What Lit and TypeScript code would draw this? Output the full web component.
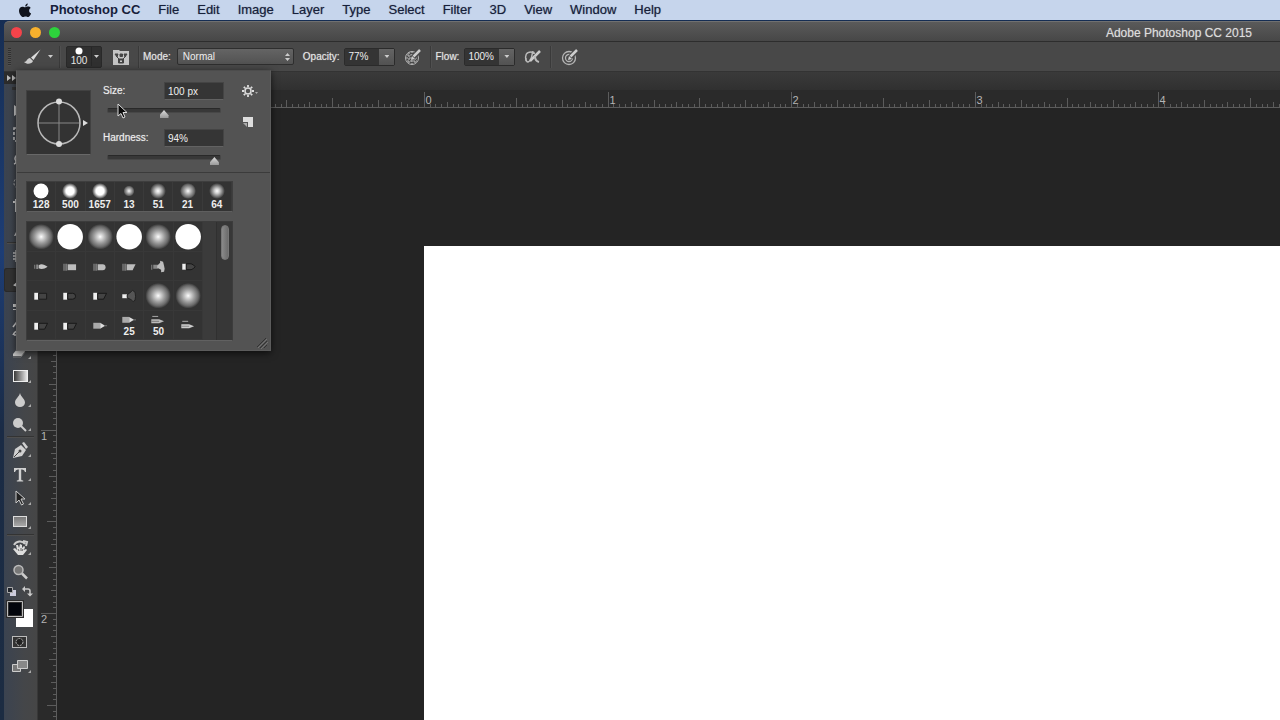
import { LitElement, html, svg, css } from "lit";
import { customElement, property, state } from "lit/decorators.js";
import { classMap } from "lit/directives/class-map.js";

const INCH = 183.6;

@customElement("ps-ruler")
class PsRuler extends LitElement {
  @property({ type: Boolean }) vertical = false;
  @property({ type: Number }) origin = 0;
  @state() private extent = 0;
  private observer = new ResizeObserver(() => this.measure());

  static styles = css`
    :host { display: block; overflow: hidden; background: #2a2a2a; }
    svg { display: block; width: 100%; height: 100%; }
    .tick { stroke: #5c5c5c; stroke-width: 1; shape-rendering: crispEdges; }
    .num { fill: #b4b4b4; font: 11px "Liberation Sans", Arial, sans-serif; }
  `;

  connectedCallback() {
    super.connectedCallback();
    this.observer.observe(this);
  }

  disconnectedCallback() {
    this.observer.disconnect();
    super.disconnectedCallback();
  }

  private measure() {
    this.extent = this.vertical ? this.clientHeight : this.clientWidth;
  }

  firstUpdated() {
    this.measure();
  }

  render() {
    const marks = [];
    const step = INCH / 32;
    const size = this.vertical ? 19 : 18;
    const limit = this.extent;
    const first = -Math.floor(this.origin / step);
    for (let i = first; this.origin + i * step < limit; i++) {
      const p = Math.round(this.origin + i * step) + 0.5;
      const len = i % 32 === 0 ? 16 : i % 16 === 0 ? 10 : i % 8 === 0 ? 8 : i % 4 === 0 ? 6 : 4;
      marks.push(
        this.vertical
          ? svg`<line class="tick" x1=${size - len} x2=${size} y1=${p} y2=${p}></line>`
          : svg`<line class="tick" y1=${size - len} y2=${size} x1=${p} x2=${p}></line>`
      );
      if (i % 32 === 0 && i >= 0 && p + 12 < limit) {
        marks.push(
          this.vertical
            ? svg`<text class="num" x="3" y=${p + 9}>${i / 32}</text>`
            : svg`<text class="num" x=${p + 1} y="14">${i / 32}</text>`
        );
      }
    }
    const edge = this.vertical
      ? svg`<line class="tick" x1="18.5" x2="18.5" y1="0" y2=${limit}></line>`
      : svg`<line class="tick" x1="0" x2=${limit} y1="17.5" y2="17.5"></line>`;
    return html`<svg aria-hidden="true">${marks}${edge}</svg>`;
  }
}

const tip = {
  soft: svg`<circle cx="15" cy="15" r="13" fill="url(#soft)"/>`,
  hard: svg`<circle cx="15" cy="15" r="13" fill="#fff"/>`,
  round: svg`<path d="M8 13h1v4h-1zM10 12.6h2v4.6h-2z" fill="#8a8a8a"/><path d="M12.500 13.500C15 11.500 18 12.500 21.500 15C18 17.500 15 17.800 12.500 16.500z" fill="#c6c6c6"/>`,
  flat: svg`<path d="M8 12h1.500v7H8zM10 12h2v7h-2z" fill="#777"/><path d="M12.500 12.500h8.500v6h-8.500z" fill="#bdbdbd"/>`,
  flatRound: svg`<path d="M8 12h1.500v7H8zM10 12h2v7h-2z" fill="#777"/><path d="M12.500 12.500h5q3 0 3 3t-3 3h-5z" fill="#bdbdbd"/>`,
  angle: svg`<path d="M8 12h1.500v7H8zM10 12h2v7h-2z" fill="#777"/><path d="M12.500 12.500h9l-3 6h-6z" fill="#bdbdbd"/>`,
  fan: svg`<path d="M8 13h1v5H8zM10 13h5v4h-5z" fill="#888"/><path d="M14 14l3-3V9l3 1 1 4 .6 3-.6 3-3 .5V18l-4-2z" fill="#bdbdbd"/>`,
  bPoint: svg`<path d="M9 12h4v6H9z" fill="#eee"/><path d="M13 12h5q3 1 4 3-1 2-4 3h-5z" fill="#444" stroke="#171717"/>`,
  bFlat: svg`<path d="M8 12h4v7H8z" fill="#f0f0f0"/><path d="M12.500 12.500h8v6h-8z" fill="#444" stroke="#1d1d1d"/>`,
  bCurve: svg`<path d="M8 12h4v7H8z" fill="#f0f0f0"/><path d="M12.500 12.500h5q3 0 3 3t-3 3h-5z" fill="#444" stroke="#171717"/>`,
  bAngle: svg`<path d="M8 12h4v7H8z" fill="#f0f0f0"/><path d="M12.500 12.500h9l-3 6h-6z" fill="#444" stroke="#171717"/>`,
  bFan: svg`<path d="M8 13.500h5v4H8z" fill="#eee"/><path d="M13 14l4-3 1.500-1.500 2.500 2 .5 4-.5 4-2 1.500L17 19l-4-2z" fill="#555" stroke="#222"/>`,
  pencil: svg`<path d="M8 12h7v6H8z" fill="#aaa"/><path d="M15 12l5 3-5 3z" fill="#ddd"/><path d="M19 14.500h3v1h-3z" fill="#777"/>`,
  pencilHi: svg`<path d="M8 6h7v6H8z" fill="#aaa"/><path d="M15 6l5 3-5 3z" fill="#ddd"/><path d="M19 8.500h3v1h-3z" fill="#777"/>`,
  sprayHi: svg`<path d="M9 5h6v1H9z" fill="#aaa"/><path d="M8 8.500h8l5 2-5 2H8z" fill="#bbb"/><path d="M8 10h8v1H8z" fill="#777"/>`,
  spray: svg`<path d="M9 10h6v1H9z" fill="#aaa"/><path d="M8 13.500h8l5 2-5 2H8z" fill="#ccc"/><path d="M8 15h8v1H8z" fill="#888"/>`
};

const library: { kind: keyof typeof tip; size?: number }[] = [
  { kind: "soft" }, { kind: "hard" }, { kind: "soft" }, { kind: "hard" }, { kind: "soft" }, { kind: "hard" },
  { kind: "round" }, { kind: "flat" }, { kind: "flatRound" }, { kind: "angle" }, { kind: "fan" }, { kind: "bPoint" },
  { kind: "bFlat" }, { kind: "bCurve" }, { kind: "bAngle" }, { kind: "bFan" }, { kind: "soft" }, { kind: "soft" },
  { kind: "bAngle" }, { kind: "bAngle" }, { kind: "pencil" }, { kind: "pencilHi", size: 25 }, { kind: "sprayHi", size: 50 }, { kind: "spray" }
];

const recent = [
  { size: 128, r: 7.5, fill: "#fff" },
  { size: 500, r: 8, fill: "url(#firm)" },
  { size: 1657, r: 8, fill: "url(#firm)" },
  { size: 13, r: 5.5, fill: "url(#soft)" },
  { size: 51, r: 8, fill: "url(#mid)" },
  { size: 21, r: 8, fill: "url(#soft)" },
  { size: 64, r: 8, fill: "url(#mid)" }
];

const gradients = svg`<defs>
  <radialGradient id="soft"><stop offset="0" stop-color="#fff"/><stop offset=".12" stop-color="#e4e4e4"/><stop offset=".5" stop-color="#9c9c9c"/><stop offset=".8" stop-color="#686868"/><stop offset="1" stop-color="#333"/></radialGradient>
  <radialGradient id="mid"><stop offset="0" stop-color="#fff"/><stop offset=".3" stop-color="#d0d0d0"/><stop offset=".7" stop-color="#777"/><stop offset="1" stop-color="#303030"/></radialGradient>
  <radialGradient id="firm"><stop offset="0" stop-color="#fff"/><stop offset=".5" stop-color="#fff"/><stop offset=".75" stop-color="#999"/><stop offset="1" stop-color="#303030"/></radialGradient>
</defs>`;

@customElement("ps-brush-panel")
class PsBrushPanel extends LitElement {
  static styles = css`
    :host {
      display: block; box-sizing: border-box; width: 255px; color: #eee;
      background: #535353; border: 1px solid #5c5c5c; border-top-color: #4c4c4c;
      box-shadow: 0 2px 7px #000a;
      font: 10px/14px "Liberation Sans", Arial, sans-serif;
    }
    * { box-sizing: border-box; }
    svg { display: block; }
    button { background: none; border: 0; padding: 0; color: inherit; font: inherit; }
    .top { display: flex; height: 102px; padding: 11px 12px 0 9px; border-bottom: 1px solid #3b3b3b; }
    .angle { width: 65px; height: 65px; margin-top: 8px; background: #333; border: 1px solid #414141; border-bottom-color: #686868; }
    .fields { margin-left: 12px; width: 121px; }
    .line { display: flex; justify-content: space-between; align-items: center; height: 18px; text-shadow: 0 0 1px #eee8; }
    .line input {
      width: 60px; height: 18px; padding: 0 3px; color: #eee; font: inherit;
      background: #353535; border: 1px solid #444; border-bottom-color: #626262; outline: 0;
    }
    input[type="range"] {
      appearance: none; display: block; width: 114px; height: 13px; margin: 4px 0 12px 4px;
      background: none; outline: 0;
    }
    input[type="range"]::-webkit-slider-runnable-track {
      height: 5px; border-radius: 2px; background: #383838; border: 1px solid #474747; border-top-color: #292929;
    }
    input[type="range"]::-webkit-slider-thumb {
      appearance: none; width: 9px; height: 8px; margin-top: 1px;
      background: linear-gradient(#ddd, #999);
      clip-path: polygon(50% 0, 100% 65%, 100% 100%, 0 100%, 0 65%);
    }
    .side { display: flex; flex-direction: column; gap: 17px; padding-top: 2px; margin-left: auto; }
    .recent {
      display: grid; grid-template-columns: repeat(7, minmax(0, 1fr)); width: 207px; height: 31px; margin: 8px 9px 9px;
      background: #333; border: 1px solid #3e3e3e; border-bottom-color: #5f5f5f;
    }
    .recent button { border-right: 1px solid #3a3a3a; overflow: visible; }
    .recent svg { width: 28px; height: 16px; margin: 0 auto; }
    .num { display: block; font-size: 10px; line-height: 12px; font-weight: 700; text-align: center; }
    .list { display: flex; width: 207px; height: 120px; margin: 0 9px 9px; background: #333; border: 1px solid #3c3c3c; border-bottom-color: #616161; }
    .cells { display: grid; grid-template: repeat(4, minmax(0, 1fr)) / repeat(6, minmax(0, 1fr)); width: 176px; }
    .cells button { position: relative; border: 1px solid #383838; border-width: 0 1px 1px 0; }
    .cells svg { width: 100%; height: 100%; overflow: visible; }
    .cells .num { position: absolute; left: 0; right: 0; bottom: 1px; }
    .blank { flex: 1; background: #3b3b3b; }
    .scroll { width: 16px; padding: 3px 0 0 4px; background: #373737; border-left: 1px solid #303030; }
    .thumb { width: 8px; height: 35px; border-radius: 4px; background: linear-gradient(90deg, #8a8a8a, #6c6c6c); border: 1px solid #777; }
    .grip { position: absolute; right: 2px; bottom: 1px; }
  `;

  render() {
    return html`
      <div class="top">
        <div class="angle">
          <svg width="63" height="63" viewBox="0 0 63 63" fill="none">
            <path d="M11 32H53M32 11V53" stroke="#888"/>
            <circle cx="32" cy="32" r="21" stroke="#b8b8b8" stroke-width="1.500"/>
            <circle cx="32" cy="10.500" r="3" fill="#ddd"/><circle cx="32" cy="53" r="3" fill="#ddd"/>
            <path d="M56 29l5 3-5 3z" fill="#ddd"/>
          </svg>
        </div>
        <div class="fields">
          <div class="line"><label for="size">Size:</label><input id="size" value="100 px" /></div>
          <input type="range" aria-label="Size" min="0" max="200" value="100" />
          <div class="line"><label for="hard">Hardness:</label><input id="hard" value="94%" /></div>
          <input type="range" aria-label="Hardness" min="0" max="95" value="94" />
        </div>
        <div class="side">
          <button aria-label="Panel options">
            <svg width="16" height="14" viewBox="0 0 16 14">
              <g stroke="#ddd" fill="none"><circle cx="6" cy="7" r="3" stroke-width="1.500"/><path stroke-width="1.800" d="M6 1v2M6 11v2M0 7h2M10 7h2M1.800 2.800l1.400 1.400M8.800 9.800l1.400 1.400M10.200 2.800L8.800 4.200M3.200 9.800l-1.400 1.400"/></g>
              <path d="M13 8h3l-1.500 2z" fill="#aaa"/>
            </svg>
          </button>
          <button aria-label="New brush preset">
            <svg width="16" height="14" viewBox="0 0 16 14"><path d="M1 2h10v10H6V7H1z" fill="#ddd"/><path d="M1 8h4v4z" fill="#aaa"/></svg>
          </button>
        </div>
      </div>
      <div class="recent">
        ${recent.map((b) => html`<button>
          <svg viewBox="0 0 28 16">${gradients}<circle cx="14" cy="8" r=${b.r} fill=${b.fill}></circle></svg>
          <span class="num">${b.size}</span>
        </button>`)}
      </div>
      <div class="list">
        <div class="cells">
          ${library.map((b) => html`<button aria-label="Brush tip">
            <svg viewBox="1 0 28 29">${gradients}${tip[b.kind]}</svg>
            ${b.size ? html`<span class="num">${b.size}</span>` : ""}
          </button>`)}
        </div>
        <div class="blank"></div>
        <div class="scroll"><div class="thumb"></div></div>
      </div>
      <svg class="grip" width="11" height="11" viewBox="0 0 11 11"><path d="M0 9L9 0M3 10L10 3M7 10l3-3" stroke="#333"/><path d="M1 10L10 1M4 11l7-7" stroke="#888" stroke-width=".6"/></svg>
    `;
  }
}

const tool = {
  move: svg`<path d="M4 5l9 6-9 5z" fill="#ccc"/>`,
  marquee: svg`<rect x="4" y="4" width="13" height="13" fill="none" stroke="#ccc" stroke-width="1.500" stroke-dasharray="3 2"/>`,
  lasso: svg`<path d="M4 16c3-1 2-3 1-5 0-5 8-8 11-4 2 5-5 8-10 5" fill="none" stroke="#ccc" stroke-width="1.500"/>`,
  quick: svg`<circle cx="10" cy="11" r="6" fill="none" stroke="#bbb" stroke-dasharray="2 2"/>`,
  crop: svg`<path d="M3 6h12v11M6 3v12h11" fill="none" stroke="#ccc" stroke-width="2"/>`,
  dropper: svg`<path d="M4 16l2-4 5-5 3 3-5 5z" fill="#ccc"/>`,
  heal: svg`<path d="M3 7h14M3 10h14M3 13h14M6 4v12" stroke="#bbb" stroke-width="1.500"/>`,
  brush: svg`<path d="M3 15c2 0 2-3 5-3l2 2c-1 3-5 3-7 1zM9 11l8-8-6 9z" fill="#ddd"/>`,
  stamp: svg`<path d="M3 10h14v3H3zM3 15h14v1H3zM8 4h4v6H8z" fill="#ccc"/>`,
  history: svg`<path d="M3 17c1-2 2-4 5-4l7-8M3 9l3-4 3 4M4 17h4" stroke="#ccc" fill="none" stroke-width="1.500"/>`,
  eraser: svg`<path d="M3 12l5-6h9l-5 8H3z" fill="#c4c4c4"/><path d="M3 15h8l4-5" stroke="#777" fill="none"/>`,
  gradient: svg`<defs><linearGradient id="gr"><stop stop-color="#333"/><stop offset="1" stop-color="#eee"/></linearGradient></defs><rect x="3.500" y="4.500" width="14" height="11" fill="url(#gr)" stroke="#eee"/>`,
  blur: svg`<path d="M10 3c1 4 5 6 5 9.500a5 4.500 0 0 1-10 0C5 9 9 7 10 3z" fill="#ccc"/>`,
  dodge: svg`<circle cx="8" cy="9" r="5" fill="#ccc"/><path d="M11 12l5 5" stroke="#ccc" stroke-width="2"/>`,
  pen: svg`<path d="M3 18l2-9 6-4 5 5-4 6z" fill="#d0d0d0"/><path d="M12 3l2-1 4 5-2 2z" fill="#d0d0d0"/><path d="M4 17l5-5" stroke="#444"/><circle cx="10" cy="11" r="1.500" fill="#444"/>`,
  type: svg`<path d="M4 4h12v4h-1q-.5-2.500-3-2.500h-.8v10q0 1 2 1v.9H6.800v-.9q2 0 2-1v-10H8q-2.500 0-3 2.500H4z" fill="#d0d0d0"/>`,
  select: svg`<path d="M6 3v12l3-3 2.500 5 2-1-2.500-5h4z" fill="#222" stroke="#ccc"/>`,
  rect: svg`<defs><linearGradient id="rg" x2="0" y2="1"><stop stop-color="#777"/><stop offset="1" stop-color="#aaa"/></linearGradient></defs><rect x="3.500" y="4.500" width="13" height="10" fill="url(#rg)" stroke="#ddd"/>`,
  hand: svg`<path d="M4 7c2-4 8-5 11-1M13 3l4 1-1 4" fill="none" stroke="#ccc" stroke-width="2"/><path d="M3 11l2-1 2 2-1-5 2 0 1 3 1-4 2 1v3l2-2 1 1-1 3 2-1 1 1-4 5H8z" fill="#ddd"/><path d="M8 11l1 2M11 10v3M13 11l-1 2" stroke="#666" fill="none"/>`,
  zoom: svg`<circle cx="8.500" cy="8" r="4.500" fill="#777" stroke="#bbb" stroke-width="1.500"/><path d="M12 11.500l5 5" stroke="#ccc" stroke-width="2.500"/>`
};

const toolGroups: (keyof typeof tool)[][] = [
  ["move", "marquee", "lasso", "quick", "crop", "dropper"],
  ["heal", "brush", "stamp", "history", "eraser", "gradient", "blur", "dodge"],
  ["pen", "type", "select", "rect"],
  ["hand", "zoom"]
];

@customElement("ps-toolbar")
class PsToolbar extends LitElement {
  static styles = css`
    :host { display: block; background: linear-gradient(90deg, #3b4350, #444649 60%, #464646); border-right: 1px solid #383838; }
    * { box-sizing: border-box; }
    button { background: none; border: 0; padding: 0; display: flex; justify-content: center; align-items: center; }
    svg { display: block; }
    .head { height: 12px; padding: 3px; background: #2c2c2c; }
    .grip { height: 14px; padding: 3px 8px; }
    .grip i { display: block; height: 3px; background: #333; }
    .tool { position: relative; width: 100%; height: 24px; padding-right: 2px; border-radius: 3px; }
    .active { background: #333; box-shadow: inset 0 0 0 1px #2a2a2a; }
    .more::after {
      content: ""; position: absolute; right: 6px; bottom: 5px; width: 3px; height: 3px;
      background: #aaa; clip-path: polygon(100% 0, 100% 100%, 0 100%);
    }
    .sep { height: 2px; margin: 0 3px; background: #333; border-bottom: 1px solid #4e4e4e; }
    .mini { display: flex; height: 14px; padding: 0 4px 0 2px; justify-content: space-between; }
    .well { padding-left: 2px; height: 32px; }
  `;

  render() {
    return html`
      <div class="head"><svg width="9" height="6" viewBox="0 0 9 6"><path d="M0 0l4 3-4 3zM5 0l4 3-4 3z" fill="#bbb"/></svg></div>
      <div class="grip"><i></i></div>
      ${toolGroups.map((group, g) => html`
        ${g ? html`<div class="sep"></div>` : ""}
        ${group.map((name) => html`<button class=${classMap({ tool: true, more: name !== "zoom", active: name === "brush" })} aria-label=${name}>
          <svg width="20" height="20" viewBox="0 0 20 20">${tool[name]}</svg>
        </button>`)}
      `)}
      <div class="mini">
        <button aria-label="Default colors"><svg width="11" height="11" viewBox="0 0 11 11"><path d="M4 4h6v6H4z" fill="#ccd"/><path d="M1.500 1.500h5v5h-5z" fill="#20242c" stroke="#aaa"/></svg></button>
        <button aria-label="Swap colors"><svg width="11" height="11" viewBox="0 0 11 11"><path d="M3 3h3q2 0 2 2v3" fill="none" stroke="#ccc" stroke-width="1.500"/><path d="M0 3l3-3v6zM5 7.500h6l-3 3z" fill="#ccc"/></svg></button>
      </div>
      <button class="well" aria-label="Foreground and background colors">
        <svg width="28" height="28" viewBox="0 0 28 28"><path d="M10 9h17v18H10z" fill="#fff"/><path d="M1.500 1.500h15v15h-15z" fill="#03060d" stroke="#2c2c2c" stroke-width="3"/><path d="M1.500 1.500h15v15h-15z" fill="none" stroke="#bbb"/></svg>
      </button>
      <button class="tool" aria-label="Quick mask"><svg width="20" height="20" viewBox="0 0 20 20"><rect x="2.500" y="4.500" width="14" height="11" fill="#333" stroke="#bbb"/><circle cx="9.500" cy="10" r="3.500" fill="#222" stroke="#bbb" stroke-dasharray="2 1"/></svg></button>
      <button class="tool more" aria-label="Screen mode"><svg width="20" height="20" viewBox="0 0 20 20"><path d="M2.500 8.500h8v7h-8z" fill="#777" stroke="#ccc"/><path d="M7.500 4.500h10v8h-10z" fill="#888" stroke="#ccc"/></svg></button>
    `;
  }
}

const pressureIcon = (inner: unknown) => html`<svg width="20" height="20" viewBox="0 0 20 20" fill="none" stroke="#b5b5b5">
  ${inner}<path d="M9.500 11l7-7.500" stroke="#474747" stroke-width="5"/><path d="M10.500 9.500L17 3" stroke="#ccc" stroke-width="2.500"/><path d="M8 13l1-4 3 3z" fill="#ccc" stroke="none"/>
</svg>`;

const menus = ["File", "Edit", "Image", "Layer", "Type", "Select", "Filter", "3D", "View", "Window", "Help"];

@customElement("app-root")
class AppRoot extends LitElement {
  static styles = css`
    :host {
      display: flex; flex-direction: column; height: 100vh; overflow: hidden; position: relative;
      background: linear-gradient(#152c50, #1d3d75 35%, #1a2b45 60%, #1c2c42);
      font: 10px/14px "Liberation Sans", Arial, sans-serif; color: #e6e6e6;
    }
    * { box-sizing: border-box; }
    svg { display: block; flex: none; }
    button { background: none; border: 0; padding: 0; color: inherit; font: inherit; }
    .menubar {
      display: flex; align-items: center; gap: 18px; height: 20px; padding-left: 18px;
      background: #c6d5ec; color: #16203a; font-size: 13px; line-height: 20px;
    }
    .menubar button { text-shadow: 0 0 1px #16203a88; }
    .menubar .app { font-weight: 700; text-shadow: none; }
    .window { flex: 1; display: flex; flex-direction: column; min-height: 0; margin: 1px 0 0 4px; }
    .title {
      display: flex; align-items: center; height: 21px; padding: 2px 28px 0 7px;
      background: linear-gradient(#5a5a5a, #474747); border-bottom: 1px solid #2d2d2d; border-radius: 5px 0 0 0;
      border-top: 1px solid #707070;
    }
    .lights { display: flex; gap: 8px; }
    .light { width: 11px; height: 11px; border-radius: 6px; }
    .close { background: #f4434a; } .min { background: #f7b02d; } .max { background: #2dd23c; }
    .name { margin: 0; margin-left: auto; font-size: 12px; font-weight: 400; line-height: 16px; color: #ddd; text-shadow: 0 0 1px #ddd8; }
    .options {
      position: relative; z-index: 2; display: flex; align-items: center; height: 30px; padding-left: 4px;
      background: #484848; border-bottom: 1px solid #333; text-shadow: 0 0 1px #eee8;
    }
    .grip { width: 3px; height: 18px; margin-right: 13px; background: repeating-linear-gradient(#303030 0 1px, #505050 1px 2px); }
    .sep { width: 2px; height: 22px; background: #3a3a3a; border-right: 1px solid #505050; }
    .caret { width: 5px; height: 3px; background: #ccc; clip-path: polygon(0 0, 100% 0, 50% 100%); }
    .brush { display: flex; align-items: center; gap: 5px; margin-right: 6px; }
    .preset { display: flex; align-items: center; width: 36px; height: 22px; margin: 0 11px 0 5px; background: #303030; border: 1px solid #292929; border-radius: 2px; }
    .preset .size { display: flex; flex-direction: column; align-items: center; width: 25px; border-right: 1px solid #272727; }
    .preset .size span { line-height: 11px; font-size: 10px; }
    .preset .caret { margin-left: 2px; }
    .panelbtn { margin-right: 9px; }
    .mode { display: flex; align-items: center; gap: 6px; margin: 0 9px 0 3px; position: relative; }
    select {
      appearance: none; width: 117px; height: 17px; padding: 0 5px; font: inherit; color: #eee; outline: 0;
      border: 1px solid #2e2e2e; border-radius: 2px; background: linear-gradient(#646464, #525252);
    }
    .updown { position: absolute; right: 4px; pointer-events: none; }
    .field { display: flex; align-items: center; gap: 5px; }
    .combo { display: flex; width: 51px; height: 18px; border: 1px solid #2b2b2b; border-radius: 2px; }
    .combo input { width: 34px; padding: 0 3px; border: 0; outline: 0; font: inherit; color: #eee; background: #343434; }
    .combo button { display: flex; flex: 1; align-items: center; justify-content: center; background: linear-gradient(#646464, #525252); }
    .icon { margin: 0 7px 0 8px; }
    .options .flow { margin-left: 3px; }
    .popover { position: absolute; left: 12px; top: 28px; text-shadow: none; }
    .body { flex: 1; display: grid; grid-template-columns: 34px minmax(0, 1fr); min-height: 0; }
    .doc { display: grid; grid-template: 18px 18px minmax(0, 1fr) / 19px minmax(0, 1fr); min-height: 0; }
    .tabs { grid-column: 1 / 3; background: linear-gradient(#3a3a3a, #303030); }
    .hruler { grid-column: 1 / 3; }
    .work { display: flex; background: #242424; padding: 138px 0 0 367px; }
    .canvas { flex: 1; background: #fff; }
    .cursor { position: absolute; z-index: 3; left: 117px; top: 103px; }
  `;

  render() {
    return html`
      <nav class="menubar">
        <svg width="14" height="15" viewBox="0 0 14 15"><path d="M9.800.5c.1 1.500-1.100 3-2.600 3C7 2 8.400.7 9.800.5zM7.300 4.300c.7 0 1.500-.7 2.800-.7 1 0 2 .5 2.600 1.400-2.300 1.400-1.900 4.600.4 5.500-.6 1.600-1.700 3.500-3 3.500-.9 0-1.300-.6-2.500-.6s-1.600.6-2.500.6C3.300 14 1 10.500 1 7.700c0-2.600 1.700-4 3.400-4 1.200 0 2 .6 2.900.6z" fill="#10131c"/></svg>
        <button class="app">Photoshop CC</button>
        ${menus.map((m) => html`<button>${m}</button>`)}
      </nav>
      <main class="window">
        <header class="title">
          <div class="lights">
            <button class="light close" aria-label="Close"></button>
            <button class="light min" aria-label="Minimize"></button>
            <button class="light max" aria-label="Zoom"></button>
          </div>
          <h1 class="name">Adobe Photoshop CC 2015</h1>
        </header>
        <section class="options">
          <div class="grip"></div>
          <button class="brush" aria-label="Brush tool">
            <svg width="19" height="18" viewBox="0 0 19 18"><path d="M0 14c3 0 3-4 6-4l3 3c-1 3-6 4-9 1z" fill="#ccc"/><path d="M7 9.500L16.500 1.500 9.500 12z" fill="#ddd"/></svg>
            <i class="caret"></i>
          </button>
          <div class="sep"></div>
          <button class="preset" aria-label="Brush size preset">
            <span class="size">
              <svg width="8" height="8" viewBox="0 0 8 8"><circle cx="4" cy="4" r="3.500" fill="#fff"/></svg>
              <span>100</span>
            </span>
            <i class="caret"></i>
          </button>
          <button class="panelbtn" aria-label="Toggle brush panel">
            <svg width="16" height="16" viewBox="0 0 16 16"><path d="M0 1h6l1 1h9v14H0z" fill="#c4c4c4"/><path d="M2 5h3l-1 3zM7 5h2.500v2.500H7zM14 5h-3l1 3zM3.500 7.500l3 3M12.500 7.500l-3 3M5.500 10h5v4h-5z" fill="#444" stroke="#444"/><path d="M7 11.500h2v1.500H7z" fill="#ccc"/></svg>
          </button>
          <div class="sep"></div>
          <div class="mode">
            <label for="mode">Mode:</label>
            <select id="mode"><option>Normal</option></select>
            <svg class="updown" width="5" height="8" viewBox="0 0 5 8"><path d="M0 3L2.500 0 5 3zM0 5l2.500 3L5 5z" fill="#ccc"/></svg>
          </div>
          <div class="field">
            <label for="opacity">Opacity:</label>
            <div class="combo"><input id="opacity" value="77%" /><button aria-label="Opacity slider"><i class="caret"></i></button></div>
          </div>
          <button class="icon" aria-label="Pressure for opacity">${pressureIcon(svg`<circle cx="9" cy="11" r="6.500"/><path d="M4 8h10M3 11h12M4 14h10M6 5v12M9 4v14M12 5v12" stroke-width="1.200" stroke-dasharray="2 1"/>`)}</button>
          <div class="sep"></div>
          <div class="field flow">
            <label for="flow">Flow:</label>
            <div class="combo"><input id="flow" value="100%" /><button aria-label="Flow slider"><i class="caret"></i></button></div>
          </div>
          <button class="icon" aria-label="Airbrush">
            <svg width="20" height="20" viewBox="0 0 20 20" fill="none" stroke="#bbb"><path d="M3 14q-2-9 5-9 2 0 1 3-1 6-4 7-2 0-2-4" stroke-width="1.500"/><path d="M7 14L17 4" stroke="#ccc" stroke-width="2.500"/><path d="M12 9q0 5 4 6M9 5q2 0 2 2" stroke-width="2"/></svg>
          </button>
          <div class="sep"></div>
          <button class="icon" aria-label="Pressure for size">${pressureIcon(svg`<circle cx="9" cy="11" r="6.500" stroke-width="1.300"/><circle cx="9" cy="11" r="3.500" stroke-width="1.300"/>`)}</button>
          <ps-brush-panel class="popover"></ps-brush-panel>
        </section>
        <section class="body">
          <ps-toolbar></ps-toolbar>
          <div class="doc">
            <div class="tabs"></div>
            <ps-ruler class="hruler" .origin=${386}></ps-ruler>
            <ps-ruler vertical .origin=${138}></ps-ruler>
            <div class="work"><div class="canvas"></div></div>
          </div>
        </section>
      </main>
      <svg class="cursor" width="11" height="17" viewBox="0 0 11 17"><path d="M1 1v12l3-2.500L6 15l2-1-2-4.500h4z" fill="#0a0a0a" stroke="#ddd"/></svg>
    `;
  }
}
